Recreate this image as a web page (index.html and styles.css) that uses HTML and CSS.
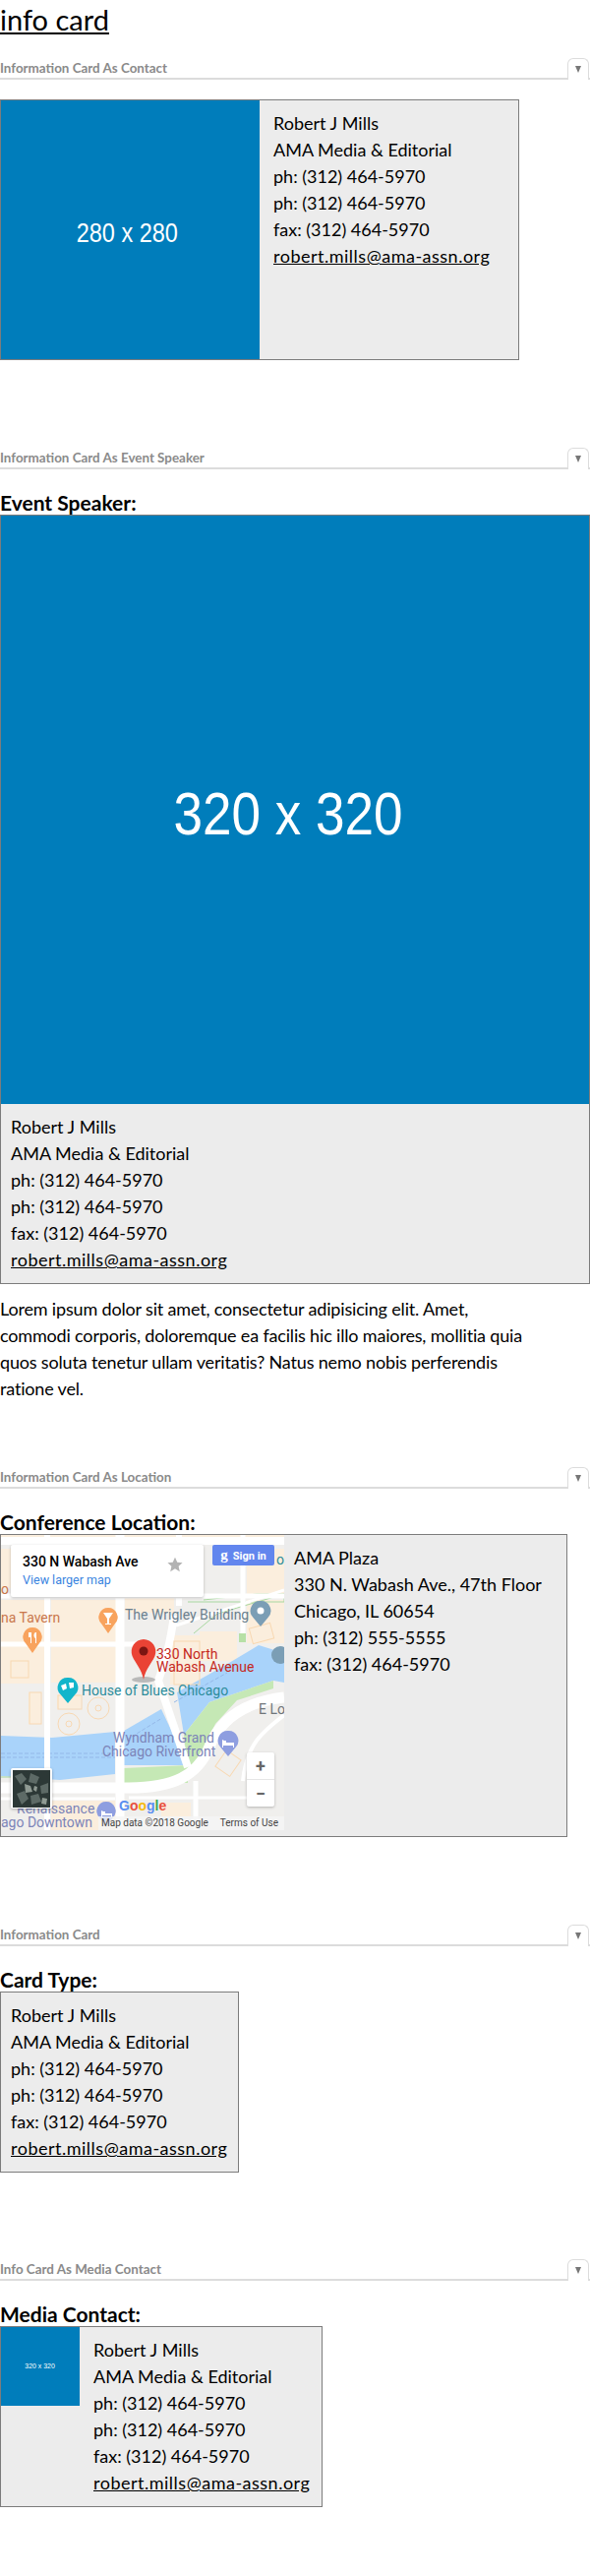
FILE: index.html
```html
<!DOCTYPE html>
<html lang="en">
<head>
    <meta charset="UTF-8">
    <meta name="viewport" content="width=device-width, initial-scale=1.0">
    <title>info card</title>
    <link rel="stylesheet" href="styles.css">
</head>
<body>
    <h1 class="page-title"><u>info card</u></h1>

    <section class="demo">
        <div class="demo-bar">
            <span class="demo-name">Information Card As Contact</span>
            <span class="demo-toggle"></span>
        </div>
        <div class="card card-contact">
            <div class="placeholder ph-280"><span>280 x 280</span></div>
            <div class="card-text">
                <div>Robert J Mills</div>
                <div>AMA Media &amp; Editorial</div>
                <div>ph: (312) 464-5970</div>
                <div>ph: (312) 464-5970</div>
                <div>fax: (312) 464-5970</div>
                <a href="#">robert.mills@ama-assn.org</a>
            </div>
        </div>
    </section>

    <section class="demo demo-speaker">
        <div class="demo-bar">
            <span class="demo-name">Information Card As Event Speaker</span>
            <span class="demo-toggle"></span>
        </div>
        <h3 class="card-title">Event Speaker:</h3>
        <div class="card card-speaker">
            <div class="placeholder ph-320"><span>320 x 320</span></div>
            <div class="card-text">
                <div>Robert J Mills</div>
                <div>AMA Media &amp; Editorial</div>
                <div>ph: (312) 464-5970</div>
                <div>ph: (312) 464-5970</div>
                <div>fax: (312) 464-5970</div>
                <a href="#">robert.mills@ama-assn.org</a>
            </div>
        </div>
        <p class="bio">Lorem ipsum dolor sit amet, consectetur adipisicing elit. Amet,<br>commodi corporis, doloremque ea facilis hic illo maiores, mollitia quia<br>quos soluta tenetur ullam veritatis? Natus nemo nobis perferendis<br>ratione vel.</p>
    </section>

    <section class="demo demo-location">
        <div class="demo-bar">
            <span class="demo-name">Information Card As Location</span>
            <span class="demo-toggle"></span>
        </div>
        <h3 class="card-title">Conference Location:</h3>
        <div class="card card-location">
            <div class="map">
                <svg class="map-art" viewBox="0 0 288 300" width="288" height="300">
                    <rect width="288" height="300" fill="#f0efed"/>
                    <!-- blocks -->
                    <g fill="#fbeedd">
                        <rect x="0" y="0" width="288" height="3"/>
                        <rect x="0" y="66" width="46" height="44"/>
                        <rect x="51" y="66" width="66" height="44"/>
                        <rect x="126" y="63" width="50" height="16"/>
                        <rect x="250" y="14" width="38" height="46"/>
                        <rect x="250" y="66" width="38" height="44"/>
                        <rect x="0" y="113" width="46" height="38"/>
                        <rect x="51" y="114" width="66" height="36"/>
                        <rect x="172" y="102" width="30" height="50"/>
                        <rect x="202" y="98" width="38" height="30"/>
                        <rect x="163" y="272" width="30" height="14"/>
                        <rect x="28" y="160" width="12" height="32"/>
                        <rect x="57" y="162" width="24" height="14"/>
                        <rect x="126" y="14" width="50" height="40"/>
                        <rect x="0" y="14" width="46" height="40"/>
                        <rect x="51" y="270" width="66" height="30"/>
                    </g>
                    <!-- river -->
                    <path d="M0 204 L52 206 L116 200 L116 243 L60 249 L0 245Z" fill="#a9d3fa"/>
                    <path d="M125 199 L163 177 L190 234 L125 234Z" fill="#a9d3fa"/>
                    <path d="M179 160 L232 130 L262 112 L288 120 L288 150 L277 148 L212 170 L186 203Z" fill="#a9d3fa"/>
                    <path d="M0 222 H116 M0 226 H116" stroke="#94b8e8" stroke-width="1" stroke-dasharray="4 2" fill="none"/>
                    <path d="M128 208 L164 186 M176 170 L230 140" stroke="#94b8e8" stroke-width="1" stroke-dasharray="4 2" fill="none"/>
                    <!-- green along the river -->
                    <path d="M186 203 L212 170 L277 148 L277 156 L240 168 L218 192 L202 226 L190 240Z" fill="#c5e8b5"/>
                    <path d="M125 237 L190 234 L190 252 L125 252Z" fill="#c5e8b5"/>
                    <path d="M190 68 H288 V60 H260 L206 66 M196 100 L220 80 L288 60" stroke="#a8d8a0" stroke-width="1" fill="none"/>
                    <rect x="242" y="100" width="7" height="9" fill="#b6e0a6"/>
                    <path d="M0 246 H52" stroke="#a8d8a0" stroke-width="1" fill="none"/>
                    <!-- roads -->
                    <g stroke="#ffffff" fill="none">
                        <path d="M0 6 H288" stroke-width="8"/>
                        <path d="M0 62 H288" stroke-width="5"/>
                        <path d="M0 111 H140" stroke-width="5"/>
                        <path d="M47 0 V300" stroke-width="6"/>
                        <path d="M121 0 V300" stroke-width="9"/>
                        <path d="M181 0 V72" stroke-width="6"/>
                        <path d="M246 0 V100" stroke-width="5"/>
                        <path d="M176 82 C172 110 168 125 160 148 L190 236" stroke-width="8"/>
                        <path d="M0 257 H130 C175 257 200 245 212 215 C222 190 245 170 288 165" stroke-width="11"/>
                        <path d="M0 268 H116 M130 267 H250" stroke-width="3"/>
                        <path d="M198 250 V300" stroke-width="5"/>
                        <path d="M288 183 C266 200 250 212 246 250" stroke-width="4"/>
                        <path d="M178 92 L288 56" stroke-width="3"/>
                    </g>
                    <!-- building outlines -->
                    <g fill="none" stroke="#f8d8b2" stroke-width="1">
                        <rect x="58" y="163" width="24" height="14"/>
                        <circle cx="99" cy="176" r="11"/>
                        <circle cx="99" cy="176" r="3"/>
                        <circle cx="69" cy="192" r="11"/>
                        <circle cx="69" cy="192" r="3"/>
                        <rect x="29" y="160" width="12" height="32"/>
                        <rect x="10" y="128" width="18" height="17"/>
                        <rect x="222" y="222" width="18" height="20" transform="rotate(35 231 232)"/>
                        <rect x="254" y="92" width="22" height="16" transform="rotate(-15 265 100)"/>
                        <rect x="176" y="108" width="26" height="44"/>
                    </g>
                    <!-- map labels -->
                    <g font-family="Roboto, sans-serif" font-size="14">
                        <text x="0" y="60" fill="#c9774c">o 5</text>
                        <text x="0" y="89" fill="#c9774c">na Tavern</text>
                        <text x="126" y="86" fill="#6b7f8e">The Wrigley Building</text>
                        <text x="158" y="126" fill="#c5281c">330 North</text>
                        <text x="158" y="139" fill="#c5281c">Wabash Avenue</text>
                        <text x="82" y="163" fill="#2c8c9b">House of Blues Chicago</text>
                        <text x="262" y="182" fill="#70757a">E Lo</text>
                        <text x="114" y="211" fill="#7c84b8">Wyndham Grand</text>
                        <text x="103" y="225" fill="#7c84b8">Chicago Riverfront</text>
                        <text x="16" y="283" fill="#7c84b8">Renaissance</text>
                        <text x="0" y="297" fill="#7c84b8">ago Downtown</text>
                        <text x="280" y="30" fill="#2c8c9b">o</text>
                    </g>
                    <!-- poi pins -->
                    <path d="M109 74 a9.500 9.500 0 0 1 7 16 L109 100 L102 90 a9.500 9.500 0 0 1 7 -16Z" fill="#f8a35e"/>
                    <path d="M104 79 H114 L110 85 V90 H112 V91 H106 V90 H108 V85Z" fill="#fff"/>
                    <path d="M32 94 a9.500 9.500 0 0 1 7 16 L32 120 L25 110 a9.500 9.500 0 0 1 7 -16Z" fill="#f8a35e"/>
                    <path d="M28 99 v5 h2 v6 h1 v-11z M35 99 c-2 1 -2 5 0 6 v5 h1 v-11z" fill="#fff"/>
                    <path d="M264 67 a10 10 0 0 1 7.500 17 L264 93 L256.500 84 a10 10 0 0 1 7.500 -17Z" fill="#7b9eb5"/>
                    <circle cx="264" cy="77" r="3.500" fill="#fff"/>
                    <path d="M68 145 a10 10 0 0 1 7.500 17 L68 171 L60.500 162 a10 10 0 0 1 7.500 -17Z" fill="#12b5cb"/>
                    <path d="M61 153 l5 -2 1 5 -4 2z M69 150 l5 0 0 5 -4 1z" fill="#fff"/>
                    <path d="M231 199 a10 10 0 0 1 7.500 17 L231 225 L223.500 216 a10 10 0 0 1 7.500 -17Z" fill="#8e9ee0"/>
                    <path d="M225 208 v8 h1 v-2 h10 v2 h1 v-5 h-8 v-2 h-2 z" fill="#fff"/>
                    <path d="M107 271 a9.500 9.500 0 0 1 7 16 L107 297 L100 287 a9.500 9.500 0 0 1 7 -16Z" fill="#8e9ee0"/>
                    <path d="M102 280 v7 h1 v-2 h9 v2 h1 v-4 h-7 v-2 h-2 z" fill="#fff"/>
                    <circle cx="284" cy="122" r="9" fill="#7b9eb5"/>
                    <!-- red marker -->
                    <ellipse cx="145" cy="147" rx="12" ry="3" fill="#b9b9b9"/>
                    <path d="M145 106 a12.500 12.500 0 0 1 11.500 17 C153 131 147 136 145 147 C143 136 137 131 133.500 123 a12.500 12.500 0 0 1 11.500 -17Z" fill="#ea4335"/>
                    <circle cx="145" cy="118" r="4.500" fill="#7c1512"/>
                </svg>
                <div class="map-info">
                    <div class="map-addr">330 N Wabash Ave</div>
                    <div class="map-link">View larger map</div>
                    <svg class="map-star" viewBox="0 0 24 24" width="16" height="16"><path d="M12 1l3.400 7.500 8 .8-6 5.400 1.800 8L12 18.500 4.800 22.700l1.800-8-6-5.400 8-.8z" fill="#b3b3b3"/></svg>
                </div>
                <div class="map-signin"><span class="signin-g">g</span>Sign in</div>
                <div class="map-zoom">
                    <div class="zoom-btn zoom-plus">+</div>
                    <div class="zoom-btn">&minus;</div>
                </div>
                <div class="map-sat">
                    <svg viewBox="0 0 38 38" width="38" height="38">
                        <rect width="38" height="38" fill="#2c3836"/>
                        <path d="M2 6l7-3 5 6-6 6zM18 3l9 4-3 7-8-2zM28 16l8-3v10l-7 1zM4 24l8-3 4 8-7 6zM18 26l8-2 3 8-10 3z" fill="#5d6a66"/>
                        <path d="M12 14l6 2 2 6-7 1zM22 16l3 1-1 5-3-2zM30 28l5 1-1 6-5-1z" fill="#8f9a93"/>
                    </svg>
                </div>
                <div class="map-google"><span class="g-b">G</span><span class="g-r">o</span><span class="g-y">o</span><span class="g-b">g</span><span class="g-g">l</span><span class="g-r">e</span></div>
                <div class="map-terms"><span>Map data &copy;2018 Google</span><span>Terms of Use</span></div>
            </div>
            <div class="card-text">
                <div>AMA Plaza</div>
                <div>330 N. Wabash Ave., 47th Floor</div>
                <div>Chicago, IL 60654</div>
                <div>ph: (312) 555-5555</div>
                <div>fax: (312) 464-5970</div>
            </div>
        </div>
    </section>

    <section class="demo demo-type">
        <div class="demo-bar">
            <span class="demo-name">Information Card</span>
            <span class="demo-toggle"></span>
        </div>
        <h3 class="card-title">Card Type:</h3>
        <div class="card card-plain">
            <div class="card-text">
                <div>Robert J Mills</div>
                <div>AMA Media &amp; Editorial</div>
                <div>ph: (312) 464-5970</div>
                <div>ph: (312) 464-5970</div>
                <div>fax: (312) 464-5970</div>
                <a href="#">robert.mills@ama-assn.org</a>
            </div>
        </div>
    </section>

    <section class="demo demo-media">
        <div class="demo-bar">
            <span class="demo-name">Info Card As Media Contact</span>
            <span class="demo-toggle"></span>
        </div>
        <h3 class="card-title">Media Contact:</h3>
        <div class="card card-media">
            <div class="placeholder ph-small"><span>320 x 320</span></div>
            <div class="card-text">
                <div>Robert J Mills</div>
                <div>AMA Media &amp; Editorial</div>
                <div>ph: (312) 464-5970</div>
                <div>ph: (312) 464-5970</div>
                <div>fax: (312) 464-5970</div>
                <a href="#">robert.mills@ama-assn.org</a>
            </div>
        </div>
    </section>
</body>
</html>
```

FILE: styles.css
```css
* {
    box-sizing: border-box;
}

body {
    margin: 0;
    background: #fff;
    color: #000;
    font-family: Lato, 'Noto Sans', sans-serif;
    font-size: 18px;
    line-height: 27px;
}

a {
    color: #000;
}

.page-title {
    margin: 0;
    height: 57px;
    font-size: 29px;
    line-height: 40px;
    font-weight: 400;
}

.demo-bar {
    display: flex;
    justify-content: space-between;
    align-items: flex-end;
    height: 24px;
    border-bottom: 2px solid #dcdcdc;
}

.demo-name {
    font-size: 13.4px;
    line-height: 20px;
    font-weight: 700;
    color: #8a8a8a;
}

.demo-toggle {
    display: flex;
    justify-content: center;
    align-items: center;
    width: 22px;
    height: 22px;
    margin-right: 1px;
    margin-bottom: -2px;
    border: 1px solid #dcdcdc;
    border-bottom: none;
    border-radius: 6px 6px 0 0;
    background: #fff;
}

.demo-toggle::before {
    content: "";
    border-left: 3.5px solid transparent;
    border-right: 3.5px solid transparent;
    border-top: 7px solid #777;
}

.card-title {
    margin: 20px 0 -2px;
    font-size: 21px;
    line-height: 28px;
    font-weight: 700;
}

.card {
    border: 1px solid #7c7c7c;
    background: #ececec;
}

.card-text {
    padding: 10px;
    white-space: nowrap;
}

.card-text a {
    display: block;
    letter-spacing: 0.5px;
}

.placeholder {
    display: flex;
    align-items: center;
    justify-content: center;
    flex: none;
    background: #007dbb;
    color: #fff;
    font-family: 'Liberation Sans', Arial, sans-serif;
}

.placeholder span {
    display: block;
    transform: scaleX(0.87);
    white-space: nowrap;
}

.card-contact {
    display: flex;
    width: 528px;
    height: 265px;
    margin-top: 20px;
}

.card-contact .card-text,
.card-media .card-text {
    padding-left: 14px;
}

.ph-280 {
    width: 263px;
    height: 263px;
    padding: 6px 6px 0 0;
    font-size: 27px;
    line-height: 30px;
}

.demo-speaker {
    margin-top: 87px;
}

.card-speaker {
    width: 600px;
}

.ph-320 {
    height: 598px;
    padding: 8px 15px 0 0;
    font-size: 61px;
    line-height: 70px;
}

.bio {
    margin: 12px 0 0;
    letter-spacing: -0.17px;
}

.demo-location {
    margin-top: 64px;
}

.card-location {
    display: flex;
    width: 577px;
    height: 308px;
}

.map {
    position: relative;
    width: 288px;
    height: 300px;
    flex: none;
    overflow: hidden;
    font-family: Roboto, sans-serif;
}

.map-art {
    display: block;
}

.map-info {
    position: absolute;
    left: 10px;
    top: 10px;
    width: 196px;
    height: 53px;
    padding: 7px 12px;
    background: #fff;
    border-radius: 2px;
    box-shadow: 0 1px 3px rgba(0, 0, 0, 0.25);
}

.map-addr {
    font-size: 14px;
    line-height: 20px;
    font-weight: 500;
}

.map-link {
    margin-top: 2px;
    font-size: 12.5px;
    line-height: 14px;
    color: #3a84df;
}

.map-star {
    position: absolute;
    right: 21px;
    top: 12px;
}

.map-signin {
    position: absolute;
    left: 215px;
    top: 10px;
    width: 63px;
    height: 21px;
    background: #6286ee;
    border-radius: 2px;
    color: #fff;
    font-size: 11px;
    line-height: 21px;
    font-weight: 700;
    text-align: center;
}

.signin-g {
    font-family: 'Liberation Serif', serif;
    font-size: 15px;
    margin-right: 5px;
}

.map-zoom {
    position: absolute;
    left: 250px;
    top: 221px;
    width: 28px;
    height: 55px;
    background: #fff;
    border-radius: 2px;
    box-shadow: 0 1px 3px rgba(0, 0, 0, 0.25);
}

.zoom-btn {
    height: 27px;
    color: #666;
    font-size: 18px;
    line-height: 27px;
    font-weight: 700;
    text-align: center;
}

.zoom-plus {
    height: 28px;
    border-bottom: 1px solid #e6e6e6;
}

.map-sat {
    position: absolute;
    left: 10px;
    top: 237px;
    width: 42px;
    height: 41px;
    border: 2px solid #fff;
    border-radius: 2px;
    box-shadow: 0 1px 3px rgba(0, 0, 0, 0.3);
}

.map-sat svg {
    display: block;
}

.map-google {
    position: absolute;
    left: 120px;
    top: 267px;
    font-family: 'Liberation Sans', sans-serif;
    font-size: 14px;
    line-height: 16px;
    font-weight: 700;
}

.g-b { color: #5a8ef0; }
.g-r { color: #e8503f; }
.g-y { color: #f5b90f; }
.g-g { color: #3aa757; }

.map-terms {
    position: absolute;
    left: 99px;
    top: 286px;
    width: 189px;
    height: 14px;
    display: flex;
    justify-content: space-between;
    padding: 0 6px 0 3px;
    background: rgba(245, 245, 245, 0.8);
    color: #444;
    font-size: 10px;
    line-height: 14px;
}

.demo-type {
    margin-top: 87px;
}

.card-plain {
    width: 243px;
    height: 184px;
}

.demo-media {
    margin-top: 86px;
}

.card-media {
    display: flex;
    width: 328px;
    height: 184px;
    align-items: flex-start;
}

.ph-small {
    width: 80px;
    height: 80px;
    font-size: 8px;
    line-height: 10px;
}
```
